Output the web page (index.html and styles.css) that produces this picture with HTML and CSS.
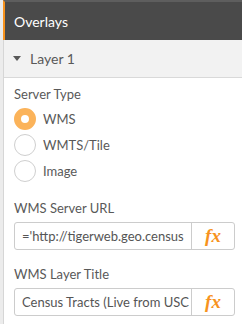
FILE: index.html
```html
<!DOCTYPE html>
<html>
  <head>
    <meta charset="UTF-8" />
    <title>Overlays</title>
    <link rel="stylesheet" href="styles.css">
  </head>
  <body>
    <div class="panel">
      <div class="title-bar">
        <span class="title-text">Overlays</span>
      </div>
      <div class="layer-head">
        <span class="caret"></span>
        <span class="layer-text">Layer 1</span>
      </div>
      <div class="props">
        <div class="prop-label">Server Type</div>
        <div class="radio-group">
          <label class="radio selected"><span class="dot"></span>WMS</label>
          <label class="radio"><span class="dot"></span>WMTS/Tile</label>
          <label class="radio"><span class="dot"></span>Image</label>
        </div>

        <div class="prop-label spaced">WMS Server URL</div>
        <div class="input-row">
          <div class="input-text">='http://tigerweb.geo.census</div>
          <div class="fx-button">fx</div>
        </div>

        <div class="prop-label spaced">WMS Layer Title</div>
        <div class="input-row">
          <div class="input-text">Census Tracts (Live from USC</div>
          <div class="fx-button">fx</div>
        </div>
      </div>
    </div>
  </body>
</html>
```

FILE: styles.css
```css
body{
	margin:0;
	background:#ececec;
	font-family:"Lato", "Liberation Sans", sans-serif;
	color:#595959;
}

.panel{
	margin-left:3px;
	min-height:324px;
	background:white;
	border-left:1px solid #d6d6d6;
}

/* dark section header */
.title-bar{
	height:38px;
	display:flex;
	align-items:center;
	background-color:#4a4a4a;
	border-top:2px solid #5e5e5e;
	border-left:2px solid #f7931e;
	margin-left:-1px;
	padding-left:9px;
}

.title-text{
	color:white;
	font-size:14px;
}

.layer-head{
	height:37px;
	display:flex;
	align-items:center;
	background:#f2f2f2;
	border-bottom:1px solid #d9d9d9;
	padding-left:9px;
}

.caret{
	width:0;
	height:0;
	border-left:4px solid transparent;
	border-right:4px solid transparent;
	border-top:5px solid #595959;
	margin-right:9px;
}

.layer-text{
	font-size:14px;
}

.props{
	padding:8px 6px 0 10px;
}

.prop-label{
	font-size:13px;
	line-height:16px;
}

.prop-label.spaced{
	margin-top:16px;
}

.radio-group{
	margin-top:4px;
	display:flex;
	flex-direction:column;
}

.radio{
	height:26px;
	display:flex;
	align-items:center;
	gap:7px;
	font-size:13px;
}

.dot{
	box-sizing:border-box;
	width:22px;
	height:22px;
	border-radius:50%;
	border:1px solid #cfcfcf;
	background:white;
}

.radio.selected .dot{
	border:7px solid #fbb35a;
}

.input-row{
	margin-top:6px;
	box-sizing:border-box;
	width:221px;
	height:28px;
	display:flex;
	border:1px solid #cccccc;
	border-radius:3px;
}

.input-text{
	flex:1;
	min-width:0;
	overflow:hidden;
	white-space:nowrap;
	padding-left:7px;
	font-size:13px;
	line-height:26px;
	color:#555;
}

.fx-button{
	width:42px;
	flex:none;
	border-left:1px solid #cccccc;
	text-align:center;
	font-family:"Liberation Serif", serif;
	font-style:italic;
	font-weight:bold;
	font-size:19px;
	line-height:26px;
	color:#f7931e;
}
```
